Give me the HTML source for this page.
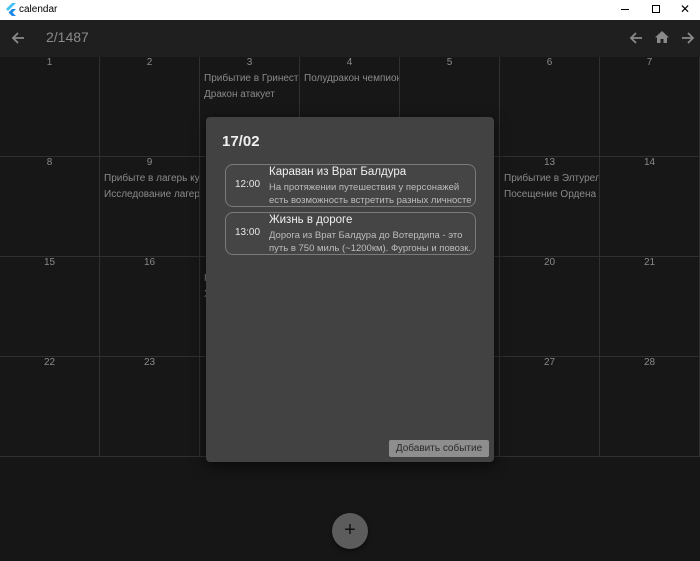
<!DOCTYPE html>
<html><head><meta charset="utf-8"><style>
*{margin:0;padding:0;box-sizing:border-box}
body{width:700px;height:561px;background:#161616;font-family:"Segoe UI","Liberation Sans","Noto Sans CJK SC",sans-serif;overflow:hidden;position:relative;color:#ccc}
.tb{position:absolute;left:0;top:0;width:700px;height:20px;background:#fff;color:#000;font-size:10px}
.bar{position:absolute;left:0;top:20px;width:700px;height:37px;background:#1f1f1f}
.grid{position:absolute;left:0;top:57px}
.cell{position:absolute;width:100px;height:100px;border-right:1px solid #303030;border-bottom:1px solid #303030;background:#171717}
.n{text-align:center;font-size:10px;color:#8a8a8a;margin-top:0px;line-height:12px;margin-bottom:2px}
.e{font-size:10px;color:#8a8a8a;padding-left:4px;line-height:16px;white-space:nowrap;overflow:hidden}
.dlg{position:absolute;left:206px;top:117px;width:288px;height:345px;background:#424242;border-radius:4px;box-shadow:0 4px 14px rgba(0,0,0,.6)}
.card{position:absolute;left:19px;width:251px;height:43px;border:1px solid #7a7a7a;border-radius:8px;background:#454545}
.t{position:absolute;left:9px;top:14px;font-size:10px;color:#e8e8e8}
.h{position:absolute;left:43px;top:1px;font-size:11.5px;color:#f0f0f0}
.d{position:absolute;left:43px;top:16px;font-size:9.5px;color:#bdbdbd;line-height:13px;white-space:nowrap;width:203px;overflow:hidden}
</style></head><body>
<div class="tb">
<svg style="position:absolute;left:6px;top:3px" width="10" height="14" viewBox="0 0 10 14"><path d="M6 0L0 6l2 2 8-8z" fill="#45c3f3"/><path d="M6 6L2.5 9.5 6 13h4L6.5 9.5 10 6z" fill="#1e88e5"/></svg>
<span style="position:absolute;left:19px;top:4px">calendar</span>
<div style="position:absolute;left:621px;top:9px;width:8px;height:1px;background:#000"></div>
<div style="position:absolute;left:652px;top:5px;width:8px;height:8px;border:1px solid #000"></div>
<span style="position:absolute;left:680px;top:2px;font-size:12px">✕</span>
</div>
<div class="bar">
<svg style="position:absolute;left:11px;top:11px" width="14" height="14" viewBox="0 0 14 14"><path d="M13 7H2M7 2L2 7l5 5" stroke="#8a8a8a" stroke-width="1.8" fill="none"/></svg>
<span style="position:absolute;left:46px;top:9px;font-size:14px;color:#8a8a8a">2/1487</span>
<svg style="position:absolute;left:629px;top:11px" width="14" height="14" viewBox="0 0 14 14"><path d="M13 7H2M7 2L2 7l5 5" stroke="#8a8a8a" stroke-width="1.8" fill="none"/></svg>
<svg style="position:absolute;left:655px;top:10px" width="14" height="14" viewBox="0 0 14 14"><path d="M7 1L0 7.5h2V13h3.5V9h3v4H12V7.5h2z" fill="#8a8a8a"/></svg>
<svg style="position:absolute;left:681px;top:11px" width="14" height="14" viewBox="0 0 14 14"><path d="M1 7h11M7 2l5 5-5 5" stroke="#8a8a8a" stroke-width="1.8" fill="none"/></svg>
</div>
<div class="grid">
<div class="cell" style="left:0;top:0"><div class="n">1</div></div>
<div class="cell" style="left:100px;top:0"><div class="n">2</div></div>
<div class="cell" style="left:200px;top:0"><div class="n">3</div><div class="e">Прибытие в Гринест</div><div class="e">Дракон атакует</div></div>
<div class="cell" style="left:300px;top:0"><div class="n">4</div><div class="e">Полудракон чемпион</div></div>
<div class="cell" style="left:400px;top:0"><div class="n">5</div></div>
<div class="cell" style="left:500px;top:0"><div class="n">6</div></div>
<div class="cell" style="left:600px;top:0"><div class="n">7</div></div>
<div class="cell" style="left:0;top:100px"><div class="n">8</div></div>
<div class="cell" style="left:100px;top:100px"><div class="n">9</div><div class="e">Прибыте в лагерь культа</div><div class="e">Исследование лагеря</div></div>
<div class="cell" style="left:200px;top:100px"><div class="n">10</div></div>
<div class="cell" style="left:300px;top:100px"><div class="n">11</div></div>
<div class="cell" style="left:400px;top:100px"><div class="n">12</div></div>
<div class="cell" style="left:500px;top:100px"><div class="n">13</div><div class="e">Прибытие в Элтурель</div><div class="e">Посещение Ордена Пламени</div></div>
<div class="cell" style="left:600px;top:100px"><div class="n">14</div></div>
<div class="cell" style="left:0;top:200px"><div class="n">15</div></div>
<div class="cell" style="left:100px;top:200px"><div class="n">16</div></div>
<div class="cell" style="left:200px;top:200px"><div class="n">17</div><div class="e">К</div><div class="e">Х</div></div>
<div class="cell" style="left:300px;top:200px"><div class="n">18</div></div>
<div class="cell" style="left:400px;top:200px"><div class="n">19</div></div>
<div class="cell" style="left:500px;top:200px"><div class="n">20</div></div>
<div class="cell" style="left:600px;top:200px"><div class="n">21</div></div>
<div class="cell" style="left:0;top:300px"><div class="n">22</div></div>
<div class="cell" style="left:100px;top:300px"><div class="n">23</div></div>
<div class="cell" style="left:200px;top:300px"><div class="n">24</div></div>
<div class="cell" style="left:300px;top:300px"><div class="n">25</div></div>
<div class="cell" style="left:400px;top:300px"><div class="n">26</div></div>
<div class="cell" style="left:500px;top:300px"><div class="n">27</div></div>
<div class="cell" style="left:600px;top:300px"><div class="n">28</div></div>
</div>
<div class="dlg">
<div style="position:absolute;left:16px;top:16px;font-size:15px;font-weight:bold;color:#f0f0f0">17/02</div>
<div class="card" style="top:47px"><div class="t">12:00</div><div class="h">Караван из Врат Балдура</div><div class="d">На протяжении путешествия у персонажей<br>есть возможность встретить разных личносте...</div></div>
<div class="card" style="top:95px"><div class="t">13:00</div><div class="h">Жизнь в дороге</div><div class="d">Дорога из Врат Балдура до Вотердипа - это<br>путь в 750 миль (~1200км). Фургоны и повозк...</div></div>
<div style="position:absolute;left:183px;top:323px;width:100px;height:17px;background:#8e8e8e;border-radius:2px;font-size:10px;color:#2a2a2a;text-align:center;line-height:17px">Добавить событие</div>
</div>
<div style="position:absolute;left:332px;top:513px;width:36px;height:36px;border-radius:50%;background:#5c5c5c;box-shadow:0 2px 5px rgba(0,0,0,.5);color:#111;font-size:20px;text-align:center;line-height:34px">+</div>
</body></html>
